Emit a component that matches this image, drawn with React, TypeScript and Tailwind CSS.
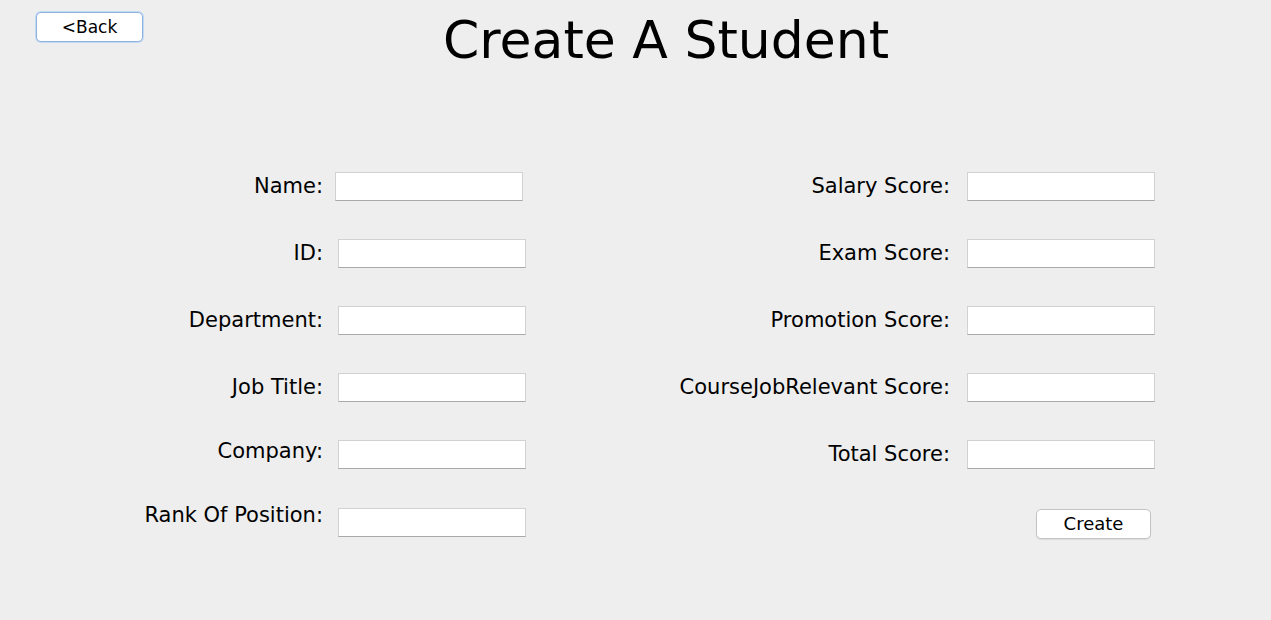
const leftFields = [
  { label: "Name:", inputOffset: "ml-[12px]", labelShift: "" },
  { label: "ID:", inputOffset: "ml-[15px]", labelShift: "" },
  { label: "Department:", inputOffset: "ml-[15px]", labelShift: "" },
  { label: "Job Title:", inputOffset: "ml-[15px]", labelShift: "" },
  { label: "Company:", inputOffset: "ml-[15px]", labelShift: "-translate-y-[3px]" },
  { label: "Rank Of Position:", inputOffset: "ml-[15px]", labelShift: "-translate-y-[7px]" },
];

const rightFields = [
  "Salary Score:",
  "Exam Score:",
  "Promotion Score:",
  "CourseJobRelevant Score:",
  "Total Score:",
];

function TextBox({ className = "" }: { className?: string }) {
  return (
    <input
      type="text"
      className={`h-[29px] w-[188px] border border-[#d2d2d2] border-b-[#a9a9a9] bg-white outline-none ${className}`}
    />
  );
}

export default function App() {
  return (
    <div className="h-[620px] w-full overflow-hidden bg-[#eeeeee] font-['DejaVu_Sans',sans-serif] text-black">
      <div className="flex items-start pl-[36px] pt-[12px]">
        <button className="h-[30px] w-[107px] rounded-[5px] border border-[#8fb3e0] bg-white text-[17px] leading-none shadow-[0_0_0_1px_#c3d8f1]">
          &lt;Back
        </button>
        <h1 className="ml-[300px] mt-[2px] text-[52px] leading-none">Create A Student</h1>
      </div>

      <div className="mt-[106px] flex flex-col gap-[38px]">
        {leftFields.map((f, i) => (
          <div key={f.label} className={`flex h-[29px] items-center ${i === 5 ? "mt-[1px]" : ""}`}>
            <div className={`w-[323px] text-right text-[21px] leading-none ${f.labelShift}`}>{f.label}</div>
            <TextBox className={f.inputOffset} />
            {i === 0 && <div className="w-[3px]" />}
            {i < rightFields.length ? (
              <>
                <div className="w-[424px] text-right text-[21px] leading-none">{rightFields[i]}</div>
                <TextBox className="ml-[17px]" />
              </>
            ) : (
              <div className="ml-[510px] flex">
                <button className="mt-[2px] h-[30px] w-[115px] rounded-[5px] border border-[#c4c4c4] bg-white text-[18px] leading-none shadow-[0_1px_1px_rgba(0,0,0,0.08)]">
                  Create
                </button>
              </div>
            )}
          </div>
        ))}
      </div>
    </div>
  );
}
